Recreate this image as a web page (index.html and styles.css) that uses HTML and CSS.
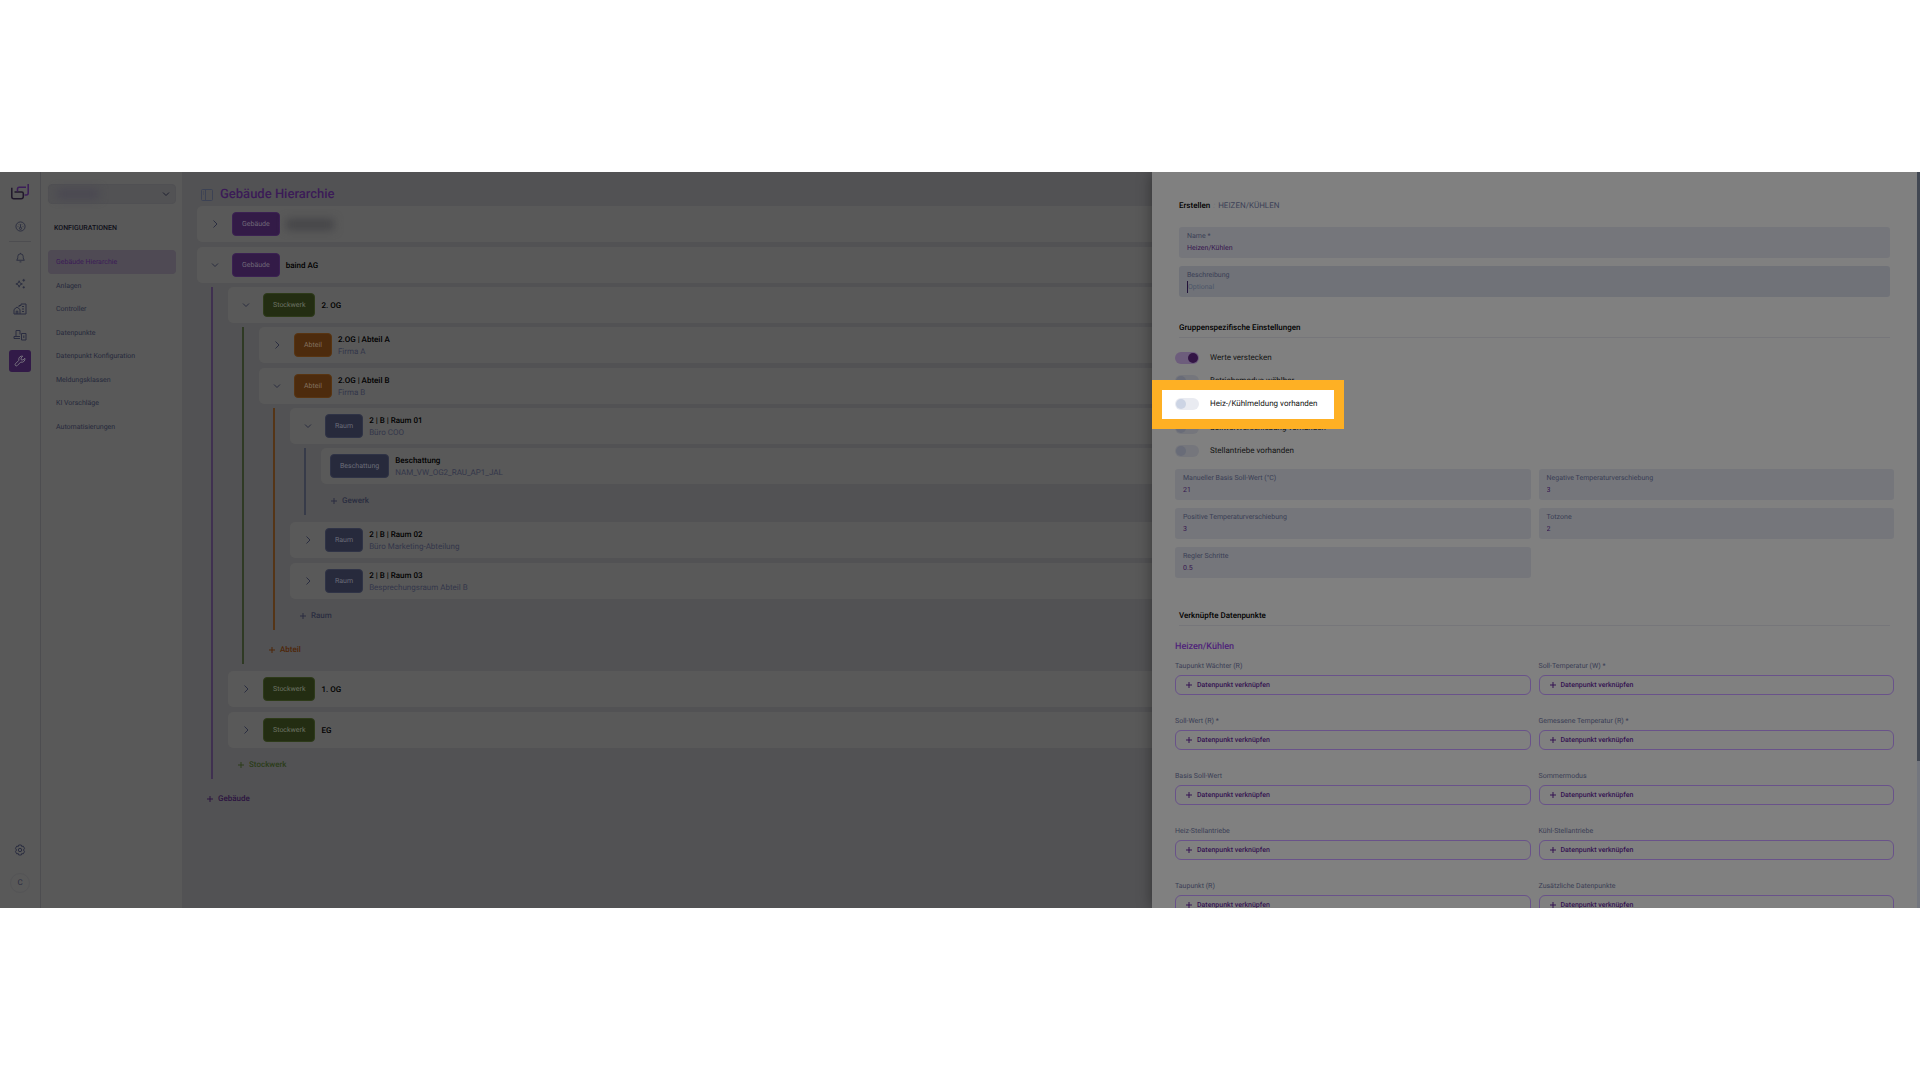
FILE: index.html
```html
<!DOCTYPE html>
<html lang="de">
<head>
  <meta charset="UTF-8" />
  <meta name="viewport" content="width=device-width, initial-scale=1" />
  <title>Gebäude Hierarchie</title>
  <link rel="stylesheet" href="styles.css">
</head>
<body>
  <!-- Shared icon shapes -->
  <svg class="sprite" aria-hidden="true">
    <symbol id="right" viewBox="0 0 10 10"><path d="M3.5 1.5 7 5 3.5 8.5"/></symbol>
    <symbol id="down" viewBox="0 0 10 10"><path d="M2 3.5 5 6.5 8 3.5"/></symbol>
    <symbol id="plus" viewBox="0 0 6 6"><path d="M3 0v6M0 3h6"/></symbol>
  </svg>

  <div class="app">
    <nav class="rail" aria-label="Hauptmenü">
      <a class="logo" href="#" aria-label="baind">
        <svg viewBox="0 0 18 16" width="18" height="16">
          <path class="logo-dark" d="M.8 3.700v9q0 2 2 2H10q2.300 0 2.300-2.300V9.500q0-1.500-1.500-1.500H3.500"/>
          <path class="logo-light" d="M6.500 7.500V5q0-1.700 1.700-1.700H15M17.200 0v9q0 2-2 2h-1.700"/>
        </svg>
      </a>
      <a class="rail-link" href="#" aria-label="Dashboard">
        <svg viewBox="0 0 12 12" width="11" height="11"><circle cx="6" cy="6" r="5"/><circle cx="6" cy="8" r="1.200"/><path d="M6 7V3.500M3.300 5.500v.6M8.700 5.500v.6M4.300 3.800v.4M7.700 3.800v.4"/></svg>
      </a>
      <hr class="rail-line">
      <a class="rail-link" href="#" aria-label="Meldungen">
        <svg viewBox="0 0 12 12" width="11" height="11"><path d="M1.800 9h8.400Q9 7.800 9 6V5a3 3 0 0 0-6 0v1Q3 7.800 1.800 9zM5 10.800h2M6 1v1"/></svg>
      </a>
      <a class="rail-link" href="#" aria-label="KI">
        <svg viewBox="0 0 12 12" width="11" height="11"><path d="M4.500 3 5.500 5.500 8 6.500 5.500 7.500 4.500 10 3.500 7.500 1 6.500 3.500 5.500zM9.500 1v3M8 2.500h3M9.500 9v2.400M8.300 10.200h2.400"/></svg>
      </a>
      <a class="rail-link" href="#" aria-label="Gebäude">
        <svg viewBox="0 0 14 12" width="14" height="12"><path d="M7 11H1V6.500L4 4l3 2.500zM6 4V2.500h2V1h5v10H7M3.200 11V8.200h1.600V11M9 3.500h2M9 6h2M9 8.500h2"/></svg>
      </a>
      <a class="rail-link" href="#" aria-label="Anlagen">
        <svg viewBox="0 0 14 12" width="14" height="12"><path d="M7 9.500H1v-2h2V1.500h4v4M1 7.500h6M8.500 4.500H13V11H8.500zM10.800 6.500V9"/></svg>
      </a>
      <a class="rail-link rail-link-active" href="#" aria-label="Konfigurationen">
        <svg viewBox="0 0 12 12" width="12" height="12"><path d="M10.800 3.200 9 5 7.200 4.800 7 3 8.800 1.200A3.200 3.200 0 0 0 4.900 5.300L1.300 8.900a1.300 1.300 0 0 0 1.800 1.800L6.700 7.100a3.200 3.200 0 0 0 4.100-3.900z"/></svg>
      </a>
      <a class="rail-link rail-settings" href="#" aria-label="Einstellungen">
        <svg viewBox="0 0 12 12" width="12" height="12"><path d="M4.700 1h2.600l.4 1.500 1.500-.4 1.300 2.200L9.500 6l1 1.700-1.300 2.200-1.500-.4L7.300 11H4.700l-.4-1.500-1.500.4-1.300-2.200L2.500 6l-1-1.700 1.300-2.200 1.500.4z"/><circle cx="6" cy="6" r="1.700"/></svg>
      </a>
      <button class="avatar" type="button">C</button>
    </nav>

    <aside class="sidebar">
      <button class="project" type="button" aria-label="Projekt wählen">
        <span class="project-name"></span>
        <svg class="icon" width="10" height="10"><use href="#down"/></svg>
      </button>
      <h2 class="sidebar-title">KONFIGURATIONEN</h2>
      <nav class="menu">
        <a class="menu-link menu-link-active" href="#">Gebäude Hierarchie</a>
        <a class="menu-link" href="#">Anlagen</a>
        <a class="menu-link" href="#">Controller</a>
        <a class="menu-link" href="#">Datenpunkte</a>
        <a class="menu-link" href="#">Datenpunkt Konfiguration</a>
        <a class="menu-link" href="#">Meldungsklassen</a>
        <a class="menu-link" href="#">KI Vorschläge</a>
        <a class="menu-link" href="#">Automatisierungen</a>
      </nav>
    </aside>

    <main class="main">
      <header class="main-header">
        <svg class="panel-icon" viewBox="0 0 12 12" width="12" height="12"><rect x=".5" y=".5" width="11" height="11" rx="1"/><path d="M4.500.5v11M2 3h1M2 5h1"/></svg>
        <h1>Gebäude Hierarchie</h1>
      </header>

      <div class="tree">
        <div class="row">
          <button class="toggle" type="button" aria-label="Öffnen"><svg class="icon" width="10" height="10"><use href="#right"/></svg></button>
          <span class="badge badge-gebaeude">Gebäude</span>
          <span class="hidden-name"></span>
        </div>
        <div class="row">
          <button class="toggle" type="button" aria-label="Schließen"><svg class="icon" width="10" height="10"><use href="#down"/></svg></button>
          <span class="badge badge-gebaeude">Gebäude</span>
          <div class="names"><strong>baind AG</strong></div>
        </div>

        <div class="group group-gebaeude">
          <div class="row">
            <button class="toggle" type="button" aria-label="Schließen"><svg class="icon" width="10" height="10"><use href="#down"/></svg></button>
            <span class="badge badge-stockwerk">Stockwerk</span>
            <div class="names"><strong>2. OG</strong></div>
          </div>

          <div class="group group-stockwerk">
            <div class="row">
              <button class="toggle" type="button" aria-label="Öffnen"><svg class="icon" width="10" height="10"><use href="#right"/></svg></button>
              <span class="badge badge-abteil">Abteil</span>
              <div class="names"><strong>2.OG | Abteil A</strong><span>Firma A</span></div>
            </div>
            <div class="row">
              <button class="toggle" type="button" aria-label="Schließen"><svg class="icon" width="10" height="10"><use href="#down"/></svg></button>
              <span class="badge badge-abteil">Abteil</span>
              <div class="names"><strong>2.OG | Abteil B</strong><span>Firma B</span></div>
            </div>

            <div class="group group-abteil">
              <div class="row">
                <button class="toggle" type="button" aria-label="Schließen"><svg class="icon" width="10" height="10"><use href="#down"/></svg></button>
                <span class="badge badge-raum">Raum</span>
                <div class="names"><strong>2 | B | Raum 01</strong><span>Büro COO</span></div>
              </div>

              <div class="group group-raum">
                <div class="row">
                  <span class="badge badge-raum">Beschattung</span>
                  <div class="names"><strong>Beschattung</strong><span>NAM_VW_OG2_RAU_AP1_JAL</span></div>
                </div>
                <button class="add add-raum" type="button"><svg class="icon" width="6" height="6"><use href="#plus"/></svg>Gewerk</button>
              </div>

              <div class="row">
                <button class="toggle" type="button" aria-label="Öffnen"><svg class="icon" width="10" height="10"><use href="#right"/></svg></button>
                <span class="badge badge-raum">Raum</span>
                <div class="names"><strong>2 | B | Raum 02</strong><span>Büro Marketing-Abteilung</span></div>
              </div>
              <div class="row">
                <button class="toggle" type="button" aria-label="Öffnen"><svg class="icon" width="10" height="10"><use href="#right"/></svg></button>
                <span class="badge badge-raum">Raum</span>
                <div class="names"><strong>2 | B | Raum 03</strong><span>Besprechungsraum Abteil B</span></div>
              </div>
              <button class="add add-raum" type="button"><svg class="icon" width="6" height="6"><use href="#plus"/></svg>Raum</button>
            </div>
            <button class="add add-abteil" type="button"><svg class="icon" width="6" height="6"><use href="#plus"/></svg>Abteil</button>
          </div>

          <div class="row">
            <button class="toggle" type="button" aria-label="Öffnen"><svg class="icon" width="10" height="10"><use href="#right"/></svg></button>
            <span class="badge badge-stockwerk">Stockwerk</span>
            <div class="names"><strong>1. OG</strong></div>
          </div>
          <div class="row">
            <button class="toggle" type="button" aria-label="Öffnen"><svg class="icon" width="10" height="10"><use href="#right"/></svg></button>
            <span class="badge badge-stockwerk">Stockwerk</span>
            <div class="names"><strong>EG</strong></div>
          </div>
          <button class="add add-stockwerk" type="button"><svg class="icon" width="6" height="6"><use href="#plus"/></svg>Stockwerk</button>
        </div>
        <button class="add add-gebaeude" type="button"><svg class="icon" width="6" height="6"><use href="#plus"/></svg>Gebäude</button>
      </div>
    </main>

    <!-- Drawer for the new entry, lies over the tree -->
    <form class="drawer">
      <div class="crumb"><strong>Erstellen</strong><i>:</i><span>HEIZEN/KÜHLEN</span></div>

      <div class="fields fields-wide">
        <div class="field">
          <label for="name">Name *</label>
          <input id="name" type="text" value="Heizen/Kühlen">
        </div>
        <div class="field field-focus">
          <label for="desc">Beschreibung</label>
          <input id="desc" type="text" placeholder="Optional">
        </div>
      </div>

      <h2 class="section">Gruppenspezifische Einstellungen</h2>
      <div class="switches">
        <label class="switch"><input type="checkbox" checked>Werte verstecken</label>
        <label class="switch"><input type="checkbox">Betriebsmodus wählbar</label>
        <label class="switch switch-marked"><input type="checkbox">Heiz-/Kühlmeldung vorhanden</label>
        <label class="switch"><input type="checkbox">Sollwertverschiebung vorhanden</label>
        <label class="switch"><input type="checkbox">Stellantriebe vorhanden</label>
      </div>

      <div class="fields">
        <div class="field">
          <label for="basis">Manueller Basis Soll-Wert (°C)</label>
          <input id="basis" type="text" value="21">
        </div>
        <div class="field">
          <label for="negative">Negative Temperaturverschiebung</label>
          <input id="negative" type="text" value="3">
        </div>
        <div class="field">
          <label for="positive">Positive Temperaturverschiebung</label>
          <input id="positive" type="text" value="3">
        </div>
        <div class="field">
          <label for="totzone">Totzone</label>
          <input id="totzone" type="text" value="2">
        </div>
        <div class="field">
          <label for="steps">Regler Schritte</label>
          <input id="steps" type="text" value="0.5">
        </div>
      </div>

      <h2 class="section section-points">Verknüpfte Datenpunkte</h2>
      <h3 class="points-title">Heizen/Kühlen</h3>
      <div class="points">
        <div class="point">
          <label for="p1">Taupunkt Wächter (R)</label>
          <button id="p1" type="button"><svg class="icon" width="6" height="6"><use href="#plus"/></svg>Datenpunkt verknüpfen</button>
        </div>
        <div class="point">
          <label for="p2">Soll-Temperatur (W) *</label>
          <button id="p2" type="button"><svg class="icon" width="6" height="6"><use href="#plus"/></svg>Datenpunkt verknüpfen</button>
        </div>
        <div class="point">
          <label for="p3">Soll-Wert (R) *</label>
          <button id="p3" type="button"><svg class="icon" width="6" height="6"><use href="#plus"/></svg>Datenpunkt verknüpfen</button>
        </div>
        <div class="point">
          <label for="p4">Gemessene Temperatur (R) *</label>
          <button id="p4" type="button"><svg class="icon" width="6" height="6"><use href="#plus"/></svg>Datenpunkt verknüpfen</button>
        </div>
        <div class="point">
          <label for="p5">Basis Soll-Wert</label>
          <button id="p5" type="button"><svg class="icon" width="6" height="6"><use href="#plus"/></svg>Datenpunkt verknüpfen</button>
        </div>
        <div class="point">
          <label for="p6">Sommermodus</label>
          <button id="p6" type="button"><svg class="icon" width="6" height="6"><use href="#plus"/></svg>Datenpunkt verknüpfen</button>
        </div>
        <div class="point">
          <label for="p7">Heiz-Stellantriebe</label>
          <button id="p7" type="button"><svg class="icon" width="6" height="6"><use href="#plus"/></svg>Datenpunkt verknüpfen</button>
        </div>
        <div class="point">
          <label for="p8">Kühl-Stellantriebe</label>
          <button id="p8" type="button"><svg class="icon" width="6" height="6"><use href="#plus"/></svg>Datenpunkt verknüpfen</button>
        </div>
        <div class="point">
          <label for="p9">Taupunkt (R)</label>
          <button id="p9" type="button"><svg class="icon" width="6" height="6"><use href="#plus"/></svg>Datenpunkt verknüpfen</button>
        </div>
        <div class="point">
          <label for="p10">Zusätzliche Datenpunkte</label>
          <button id="p10" type="button"><svg class="icon" width="6" height="6"><use href="#plus"/></svg>Datenpunkt verknüpfen</button>
        </div>
      </div>
      <div class="scrollbar"></div>
    </form>
  </div>
</body>
</html>
```

FILE: styles.css
```css
/* Global Styles */
* {
  box-sizing: border-box;
}

body {
  margin: 0;
  padding: 172px 0;
  background: #ffffff;
  font-family: Roboto, "Liberation Sans", sans-serif;
  font-size: 8px;
  line-height: 12px;
  text-rendering: geometricPrecision;
  color: #000000;
}

h1, h2, h3 {
  margin: 0;
  font-weight: 500;
}

a {
  color: inherit;
  text-decoration: none;
}

button, input {
  margin: 0;
  padding: 0;
  border: 0;
  background: none;
  font: inherit;
  color: inherit;
  text-rendering: inherit;
}

svg {
  display: block;
  fill: none;
  stroke: currentColor;
  flex-shrink: 0;
}

.sprite {
  position: absolute;
  width: 0;
  height: 0;
}

.app {
  position: relative;
  display: flex;
  height: calc(100vh - 344px);
  min-height: 640px;
  overflow: hidden;
  background: #525254;
}

/* Icon rail */
.rail {
  display: flex;
  flex-direction: column;
  align-items: center;
  gap: 4px;
  width: 41px;
  padding: 12px 0 15px;
  background: #595959;
  border-right: 1px solid #4d4d50;
  color: #2a2d40;
}

.logo {
  margin-bottom: 11px;
}

.logo svg {
  stroke-width: 1.5;
}

.logo-dark {
  stroke: #20182a;
}

.logo-light {
  stroke: #3b1d58;
}

.rail-link {
  display: flex;
  align-items: center;
  justify-content: center;
  width: 22px;
  height: 22px;
  border-radius: 3px;
}

.rail-link-active {
  background: #321a48;
  color: #77717e;
}

.rail-line {
  width: 22px;
  margin: 0;
  border: 0;
  border-top: 1px solid #4d4d50;
}

.rail-settings {
  margin-top: auto;
  margin-bottom: 8px;
}

.avatar {
  width: 20px;
  height: 20px;
  border: 1px solid #545456;
  border-radius: 50%;
}

/* Sidebar */
.sidebar {
  width: 141px;
  padding: 12px 6px 0 7px;
  background: #595959;
}

.project {
  display: flex;
  align-items: center;
  justify-content: space-between;
  width: 100%;
  height: 20px;
  padding: 0 4px 0 8px;
  border: 1px solid #505053;
  border-radius: 4px;
  background: #525254;
  color: #1e2030;
}

.project-name {
  width: 42px;
  height: 10px;
  background: #4a4852;
  filter: blur(4px);
}

.sidebar-title {
  padding: 18px 6px 16px;
  font-size: 7px;
  line-height: 12px;
  color: #10101a;
}

.menu {
  display: grid;
  grid-auto-rows: 1fr;
  height: 188px;
  font-size: 7px;
}

.menu-link {
  display: flex;
  align-items: center;
  padding: 1px 8px 0;
  border-radius: 4px;
  color: #26293c;
}

.menu-link-active {
  background: #4f4a54;
  color: #3b1b57;
}

/* Tree */
.main {
  flex: 1;
  padding: 13px 15px;
}

.main-header {
  display: flex;
  align-items: center;
  gap: 7px;
  height: 20px;
  padding-left: 4px;
  margin-bottom: 1px;
}

.main-header h1 {
  font-size: 13px;
  line-height: 20px;
  color: #3b1b57;
}

.panel-icon {
  color: #3c4254;
}

.tree, .group {
  display: flex;
  flex-direction: column;
  gap: 4px;
}

.row {
  display: flex;
  align-items: center;
  height: 36px;
  padding-left: 9px;
  border-radius: 5px;
  background: #595959;
}

.row + .row {
  margin-top: 1px;
}

.toggle {
  display: flex;
  align-items: center;
  justify-content: center;
  width: 18px;
  height: 18px;
  margin-right: 8px;
  color: #2a2d40;
}

.badge {
  height: 24px;
  padding: 0 9px;
  margin-right: 6px;
  border: 1px solid;
  border-radius: 4px;
  font-size: 7px;
  line-height: 22px;
  color: #6f6878;
}

.badge-gebaeude {
  background: #331b47;
  border-color: #3b2152;
}

.badge-stockwerk {
  background: #232d12;
  border-color: #2d3a19;
  color: #6d7364;
}

.badge-abteil {
  background: #4d2b0d;
  border-color: #583411;
  color: #83715f;
}

.badge-raum {
  background: #272a3c;
  border-color: #2f3346;
  color: #6b6d79;
}

.names {
  display: flex;
  flex-direction: column;
  padding-top: 1px;
}

.names strong {
  font-weight: 500;
}

.names span {
  color: #33364a;
}

.hidden-name {
  width: 48px;
  height: 11px;
  background: #454548;
  filter: blur(4px);
}

.group {
  margin: 0 0 3px 14px;
  padding: 0 0 2px 15px;
  border-left: 2px solid;
}

.group-gebaeude {
  border-color: #3f3050;
}

.group-stockwerk {
  border-color: #2f3a24;
}

.group-abteil {
  border-color: #553517;
}

.group-raum {
  border-color: #373b49;
}

.add {
  display: flex;
  align-items: center;
  align-self: flex-start;
  gap: 5px;
  height: 25px;
  padding: 0 10px;
  font-weight: 500;
}

.add-gebaeude {
  color: #2c1440;
}

.add-stockwerk {
  color: #2c3d1a;
}

.add-abteil {
  color: #4f2608;
}

.add-raum {
  color: #2a2d40;
}

/* Drawer */
.drawer {
  position: absolute;
  top: 0;
  right: 0;
  bottom: 0;
  width: 40%;
  padding: 28px 26px 0 23px;
  background: #808080;
  box-shadow: 0 0 14px rgba(0, 0, 0, 0.4);
}

.crumb {
  display: flex;
  gap: 3px;
  padding-left: 4px;
  margin-bottom: 15px;
  color: #3c4057;
}

.crumb strong {
  font-weight: 500;
  color: #000000;
}

.crumb i {
  color: #6c6e78;
}

.fields {
  display: grid;
  grid-template-columns: 1fr 1fr;
  gap: 8px;
}

.fields-wide {
  grid-template-columns: 1fr;
  padding: 0 4px;
}

.field {
  display: flex;
  flex-direction: column;
  height: 31px;
  padding: 3px 8px;
  border-radius: 3px;
  background: #75767b;
  font-size: 7px;
  color: #3a3e55;
}

.field input {
  height: 12px;
  color: #35154f;
  outline: none;
}

.field input::placeholder {
  color: #4c5668;
  opacity: 1;
}

.field-focus {
  background: #707278;
}

.field-focus input {
  border-left: 1px solid #22133a;
}

.section {
  margin: 24px 4px 0;
  padding-bottom: 2px;
  border-bottom: 1px solid #76767a;
  font-size: 8px;
  line-height: 14px;
}

/* Switches */
.switches {
  display: grid;
  grid-auto-rows: 1fr;
  justify-items: start;
  height: 117px;
  margin: 8px 0 6px;
}

.switch {
  display: flex;
  align-items: center;
  gap: 11px;
  color: #141414;
}

.switch input {
  appearance: none;
  width: 24px;
  height: 12px;
  padding: 1px;
  border-radius: 6px;
  background: #75767c;
}

.switch input::before {
  content: "";
  display: block;
  width: 10px;
  height: 10px;
  border-radius: 50%;
  background: #696c78;
}

.switch input:checked {
  background: #6d5d7c;
}

.switch input:checked::before {
  margin-left: 12px;
  background: #331545;
}

/* The marked switch sits on a bright framed plate */
.switch-marked {
  position: relative;
  z-index: 1;
}

.switch-marked::before {
  content: "";
  position: absolute;
  inset: -13px -26px -13px -23px;
  z-index: -1;
  border: 10px solid #feb024;
  background: #ffffff;
}

.switch-marked input {
  background: #e9ebf1;
}

.switch-marked input::before {
  background: #ccd4e4;
}

/* Linked data points */
.section-points {
  margin-top: 31px;
}

.points-title {
  margin: 13px 0 4px;
  font-size: 9px;
  line-height: 16px;
  color: #4f237a;
}

.points {
  display: grid;
  grid-template-columns: 1fr 1fr;
  gap: 19px 8px;
}

.point {
  display: flex;
  flex-direction: column;
  gap: 2px;
  font-size: 7px;
  line-height: 14px;
  color: #3a3e55;
}

.point button {
  display: flex;
  align-items: center;
  gap: 5px;
  height: 20px;
  padding: 0 10px;
  border: 1px solid #69528a;
  border-radius: 6px;
  font-weight: 500;
  color: #351352;
}

.scrollbar {
  position: absolute;
  top: 0;
  right: 0;
  width: 3px;
  height: 100%;
  background: linear-gradient(#414752 80%, #73767e 80%);
}
```
